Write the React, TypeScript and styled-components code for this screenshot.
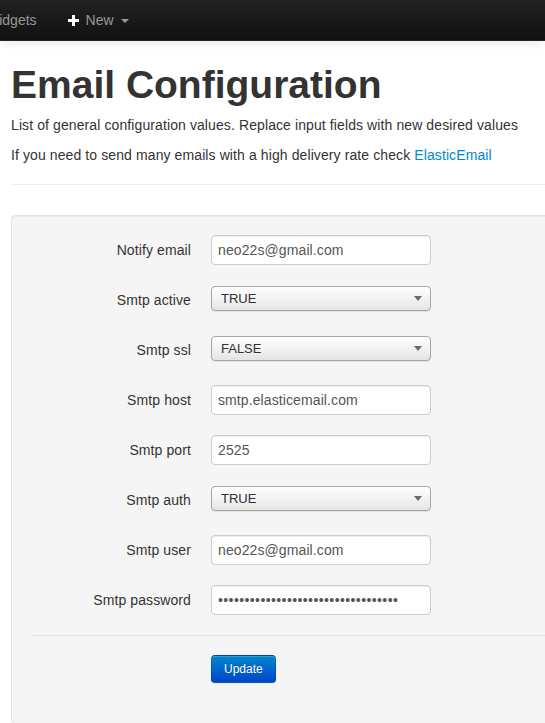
import React from "react";
import styled, {createGlobalStyle} from "styled-components";

const GlobalStyle = createGlobalStyle`
    html, body {
        margin: 0;
        overflow: hidden;
    }
    body {
        font-family: "Liberation Sans", Arial, Helvetica, sans-serif;
        font-size: 14px;
        line-height: 20px;
        letter-spacing: 0.1px;
        color: #333;
        background: #fff;
    }
`

const Navbar = styled.div`
    height: 40px;
    background: linear-gradient(to bottom, #222, #111);
    border-bottom: 1px solid #252525;
    box-shadow: 0 1px 10px rgba(0, 0, 0, .1);
    display: flex;
    align-items: center;
    position: relative;
    z-index: 2;
`

const NavList = styled.ul`
    display: flex;
    list-style: none;
    margin: 0 0 0 -29px;
    padding: 0;
`

const NavLink = styled.a`
    display: flex;
    align-items: center;
    padding: 10px 15px;
    color: #999;
    text-decoration: none;
    line-height: 20px;
    white-space: nowrap;
    letter-spacing: 0;
    text-shadow: 0 -1px 0 rgba(0, 0, 0, .25);
`

const PlusIcon = styled.svg`
    width: 11px;
    height: 11px;
    margin: 0 7px 0 1px;
`

const Caret = styled.span`
    display: inline-block;
    margin-left: 7px;
    margin-top: 1px;
    border-top: 4px solid #999;
    border-left: 4px solid transparent;
    border-right: 4px solid transparent;
`

const Main = styled.div`
    width: 620px;
    padding-left: 11px;
`

const Title = styled.h1`
    font-size: 39px;
    line-height: 40px;
    font-weight: bold;
    letter-spacing: 0;
    margin: 24px 0 10px;
    color: #333;
`

const Intro = styled.p`
    margin: 0 0 10px;
`

const Link = styled.a`
    color: #0088cc;
    text-decoration: none;
`

const Divider = styled.hr`
    margin: 19px 0 29px;
    border: 0;
    border-top: 1px solid #eee;
    border-bottom: 1px solid #fff;
`

const Well = styled.form`
    background: #f5f5f5;
    border: 1px solid #e3e3e3;
    border-radius: 4px;
    box-shadow: inset 0 1px 1px rgba(0, 0, 0, .05);
    padding: 19px 19px 0;
`

const ControlGroup = styled.div`
    display: flex;
    height: 30px;
    margin-bottom: 20px;
`

const Label = styled.label`
    width: 160px;
    margin-right: 20px;
    padding-top: 5px;
    text-align: right;
    color: #333;
`

const TextInput = styled.input`
    box-sizing: border-box;
    width: 220px;
    height: 30px;
    padding: 4px 6px;
    font-family: inherit;
    font-size: 14px;
    line-height: 20px;
    color: #555;
    background: #fff;
    border: 1px solid #ccc;
    border-radius: 4px;
    box-shadow: inset 0 1px 1px rgba(0, 0, 0, .075);
    outline: none;
    letter-spacing: ${p => p.type === "password" ? "0.4px" : "0.1px"};
`

const SelectWrap = styled.div`
    position: relative;
    width: 220px;
    height: 25px;
    margin-top: 1px;

    &::after {
        content: "";
        position: absolute;
        right: 9px;
        top: 10px;
        border-top: 5px solid #6a6a6a;
        border-left: 4px solid transparent;
        border-right: 4px solid transparent;
        pointer-events: none;
    }
`

const Select = styled.select`
    appearance: none;
    box-sizing: border-box;
    width: 100%;
    height: 100%;
    padding: 0 9px;
    font-family: inherit;
    font-size: 13px;
    color: #333;
    border: 1px solid #a6a6a6;
    border-radius: 4px;
    background: linear-gradient(to bottom, #fefefe, #f0f0f0 60%, #e4e4e4);
    box-shadow: 0 1px 1px rgba(0, 0, 0, .08);
    outline: none;
`

const FormActions = styled.div`
    border-top: 1px solid #e5e5e5;
    padding: 19px 20px 40px 180px;
`

const Button = styled.button`
    height: 28px;
    padding: 0 12px;
    font-family: inherit;
    font-size: 12px;
    letter-spacing: 0;
    color: #fff;
    text-shadow: 0 -1px 0 rgba(0, 0, 0, .25);
    background: linear-gradient(to bottom, #0088cc, #0044cc);
    border: 1px solid;
    border-color: rgba(0, 0, 0, .1) rgba(0, 0, 0, .1) rgba(0, 0, 0, .25);
    border-radius: 4px;
    box-shadow: inset 0 1px 0 rgba(255, 255, 255, .2), 0 1px 2px rgba(0, 0, 0, .05);
    cursor: pointer;
`

type Field = {label: string; value: string; kind: "text" | "select" | "password"};

const fields: Field[] = [
    {label: "Notify email", value: "neo22s@gmail.com", kind: "text"},
    {label: "Smtp active", value: "TRUE", kind: "select"},
    {label: "Smtp ssl", value: "FALSE", kind: "select"},
    {label: "Smtp host", value: "smtp.elasticemail.com", kind: "text"},
    {label: "Smtp port", value: "2525", kind: "text"},
    {label: "Smtp auth", value: "TRUE", kind: "select"},
    {label: "Smtp user", value: "neo22s@gmail.com", kind: "text"},
    {label: "Smtp password", value: "x".repeat(34), kind: "password"},
];

function App() {
    return (
        <>
            <GlobalStyle/>
            <Navbar>
                <NavList>
                    <li><NavLink href="#">Widgets</NavLink></li>
                    <li>
                        <NavLink href="#">
                            <PlusIcon viewBox="0 0 11 11">
                                <rect x="4" y="0" width="3" height="11" fill="#fff"/>
                                <rect x="0" y="4" width="11" height="3" fill="#fff"/>
                            </PlusIcon>
                            New
                            <Caret/>
                        </NavLink>
                    </li>
                </NavList>
            </Navbar>
            <Main>
                <Title>Email Configuration</Title>
                <Intro>List of general configuration values. Replace input fields with new desired values</Intro>
                <Intro>
                    If you need to send many emails with a high delivery rate check <Link href="#">ElasticEmail</Link>
                </Intro>
                <Divider/>
                <Well onSubmit={e => e.preventDefault()}>
                    {fields.map(f => (
                        <ControlGroup key={f.label}>
                            <Label>{f.label}</Label>
                            {f.kind === "select" ? (
                                <SelectWrap>
                                    <Select defaultValue={f.value}>
                                        <option>TRUE</option>
                                        <option>FALSE</option>
                                    </Select>
                                </SelectWrap>
                            ) : (
                                <TextInput type={f.kind} defaultValue={f.value}/>
                            )}
                        </ControlGroup>
                    ))}
                    <FormActions>
                        <Button type="submit">Update</Button>
                    </FormActions>
                </Well>
            </Main>
        </>
    );
}

export default App;
